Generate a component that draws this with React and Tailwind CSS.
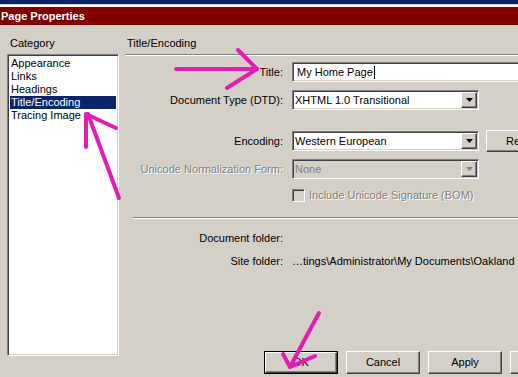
import React from 'react';

const sunken =
  'border border-t-[#808080] border-l-[#808080] border-b-white border-r-white shadow-[inset_1px_1px_0_#404040,inset_-1px_-1px_0_#d4d0c8]';
const raised =
  'border border-t-white border-l-white border-b-[#404040] border-r-[#404040] shadow-[inset_-1px_-1px_0_#808080]';

const categories = ['Appearance', 'Links', 'Headings', 'Title/Encoding', 'Tracing Image'];

const DropArrow = ({ disabled }) => (
  <div className={`w-[16px] h-[16px] flex items-center justify-center bg-[#d4d0c8] ${raised}`}>
    <svg width="7" height="4" viewBox="0 0 7 4">
      <path d="M0 0 H7 L3.5 4 Z" fill={disabled ? '#808080' : '#000'} />
    </svg>
  </div>
);

const Select = ({ value, disabled }) => (
  <div
    className={`w-[187px] h-[20px] flex items-center justify-between pl-[2px] pr-[1px] ${sunken} ${
      disabled ? 'bg-[#d4d0c8] text-[#808080]' : 'bg-white text-black'
    }`}
  >
    <span>{value}</span>
    <DropArrow disabled={disabled} />
  </div>
);

const Row = ({ label, disabled, className = '', children }) => (
  <div className={`flex items-center ${className}`}>
    <div
      className={`w-[158px] text-right shrink-0 ${
        disabled ? 'text-[#808080] [text-shadow:1px_1px_0_#fff]' : 'text-black'
      }`}
    >
      {label}
    </div>
    <div className="ml-[9px] flex items-center shrink-0">{children}</div>
  </div>
);

const Button = ({ label, isDefault }) => (
  <div
    className={`w-[74px] h-[23px] shrink-0 ${isDefault ? 'border border-black' : ''}`}
  >
    <div className={`w-full h-full bg-[#d4d0c8] flex items-center justify-center ${raised}`}>
      {label}
    </div>
  </div>
);

export default function App() {
  return (
    <div className="relative w-[518px] h-[377px] overflow-hidden bg-[#d4d0c8] text-[11px] leading-[13px] text-black font-['Liberation_Sans',Arial,sans-serif]">
      {/* window frame + title bar */}
      <div className="h-[4px] bg-[#0a246a]" />
      <div className="h-[1px] bg-[#d4d0c8]" />
      <div className="h-[2px] bg-white" />
      <div className="h-[18px] bg-[#800000] flex items-center pl-[1px]">
        <span className="text-white font-bold">Page Properties</span>
      </div>

      <div className="flex">
        {/* category list */}
        <div className="w-[125px] shrink-0 pl-[7px] pt-[12px]">
          <div className="pl-[3px]">Category</div>
          <div className={`mt-[4px] w-[112px] h-[302px] bg-white pt-[1px] px-[1px] ${sunken}`}>
            <div className="pt-[1px] px-[1px]">
              {categories.map((c) => (
                <div
                  key={c}
                  className={`h-[13px] pl-[1px] whitespace-nowrap ${
                    c === 'Title/Encoding' ? 'bg-[#0a246a] text-white' : ''
                  }`}
                >
                  {c}
                </div>
              ))}
            </div>
          </div>
        </div>

        {/* settings panel */}
        <div className="flex-1 min-w-0 pt-[12px]">
          <div className="pl-[2px]">Title/Encoding</div>
          <div className="mt-[4px] h-[2px] border-t border-t-[#808080] border-b border-b-white" />

          <Row label="Title:" className="mt-[6px]">
            <div className={`w-[240px] h-[20px] bg-white flex items-center pl-[4px] ${sunken}`}>
              <span>My Home Page</span>
              <span className="w-[1px] h-[13px] bg-black ml-[1px]" />
            </div>
          </Row>

          <Row label="Document Type (DTD):" className="mt-[8px]">
            <Select value="XHTML 1.0 Transitional" />
          </Row>

          <Row label="Encoding:" className="mt-[20px]">
            <Select value="Western European" />
            <div className="ml-[7px] w-[75px] h-[22px]">
              <div className={`w-full h-full bg-[#d4d0c8] flex items-center justify-center ${raised}`}>
                Reload
              </div>
            </div>
          </Row>

          <Row label="Unicode Normalization Form:" disabled className="mt-[7px]">
            <Select value="None" disabled />
          </Row>

          <Row label="" className="mt-[10px]">
            <div className={`w-[13px] h-[13px] bg-[#d4d0c8] ${sunken}`} />
            <span className="ml-[4px] whitespace-nowrap text-[#808080] [text-shadow:1px_1px_0_#fff]">
              Include Unicode Signature (BOM)
            </span>
          </Row>

          <div className="mt-[15px] ml-[8px] h-[2px] border-t border-t-[#808080] border-b border-b-white" />

          <Row label="Document folder:" className="mt-[13px]">
            <span />
          </Row>
          <Row label="Site folder:" className="mt-[10px]">
            <span className="whitespace-nowrap">
              …tings\Administrator\My Documents\Oakland Site
            </span>
          </Row>

          <div className="mt-[83px] ml-[139px] flex gap-[8px]">
            <Button label="OK" isDefault />
            <Button label="Cancel" />
            <Button label="Apply" />
            <Button label="Help" />
          </div>
        </div>
      </div>

      {/* magenta annotation arrows */}
      <svg
        className="absolute inset-0 pointer-events-none"
        width="518"
        height="377"
        viewBox="0 0 518 377"
      >
        <g stroke="#e31cb5" strokeWidth="4" fill="none" strokeLinecap="round" strokeLinejoin="round">
          <path d="M176 69 L256 69" />
          <path d="M238 50 L257 69 L227 88" />
          <path d="M119 198 L88 114" />
          <path d="M86 147 L86 114 L116 128" />
          <path d="M319 313 L290 367" />
          <path d="M283 354 L290 367 L315 356" />
        </g>
      </svg>
    </div>
  );
}
